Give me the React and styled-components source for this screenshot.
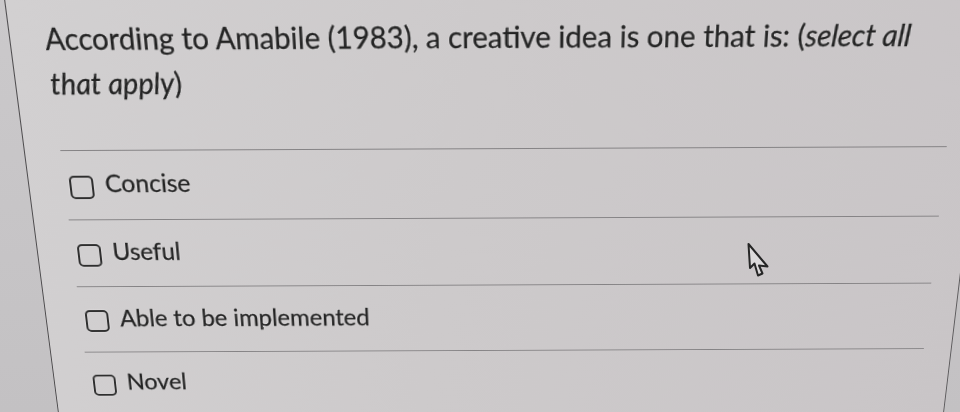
import React from 'react';
import styled, { createGlobalStyle } from 'styled-components';

const GlobalStyle = createGlobalStyle`
  html, body {
    margin: 0;
    padding: 0;
  }
  body {
    width: 960px;
    height: 412px;
    overflow: hidden;
    background: #c5c3c5;
    font-family: Lato, "Noto Sans", sans-serif;
  }
`;

const options = ['Concise', 'Useful', 'Able to be implemented', 'Novel'];

const Quiz = () => (
    <Stage>
        <GlobalStyle />
        <Scene>
            <Panel>
                <Question>
                    According to Amabile (1983), a creative idea is one that is: (<em>select all that apply</em>)
                </Question>
                <Options>
                    {options.map((label) => (
                        <Option key={label}>
                            <Box />
                            <Label>{label}</Label>
                        </Option>
                    ))}
                </Options>
            </Panel>
        </Scene>
        <Cursor viewBox="0 0 26 36" width="26" height="36">
            <path
                d="M3.5 2 L5 26 L9.5 21.5 L13 33.5 L17.5 31.5 L14 23.5 L22.5 24.5 Z"
                fill="#dcdadb"
                stroke="#262626"
                strokeWidth="2"
                strokeLinejoin="round"
            />
        </Cursor>
    </Stage>
)

const Stage = styled.div`
position: relative;
width: 960px;
height: 412px;
overflow: hidden;
background: linear-gradient(180deg, #cbc9cb 0%, #c3c1c3 100%);
`

// the photo is taken at an angle, so the whole page is tilted away at the bottom
const Scene = styled.div`
box-sizing: border-box;
width: 1000px;
height: 480px;
padding-left: 31px;
transform-origin: 500px 206px;
transform: perspective(1000px) rotateX(-15deg) rotate(-0.26deg);
`

const Panel = styled.section`
box-sizing: border-box;
width: 938px;
height: 100%;
padding: 17px 28.5px 0 33px;
border-left: 1.5px solid #4d4b4d;
border-right: 1.5px solid #5e5c5e;
background: linear-gradient(100deg, #d2d0d1 0%, #cdcacb 45%, #c9c5c7 100%);
color: #242424;
text-shadow: 0 0 1.5px rgba(255, 255, 255, 0.85);
-webkit-text-stroke: 0.3px #242424;
`

const Question = styled.p`
margin: 0;
font-size: 28.2px;
line-height: 43.4px;
font-weight: 400;

em {
    font-style: italic;
}
`

const Options = styled.div`
display: flex;
flex-direction: column;
margin: 43px 0 0 1.5px;
`

const Option = styled.div`
box-sizing: border-box;
display: flex;
align-items: center;
gap: 11.5px;
height: 71.3px;
padding-left: 5.5px;
border-top: 1.5px solid #858385;
`

const Box = styled.span`
box-sizing: border-box;
flex: none;
width: 24px;
height: 24px;
margin-top: 3.6px;
border: 2px solid #2e2e2e;
border-radius: 5px;
box-shadow: 0 0 1.5px rgba(255, 255, 255, 0.9);
`

const Label = styled.span`
font-size: 24.5px;
line-height: 1;
margin-bottom: 3.5px;
`

const Cursor = styled.svg`
position: absolute;
left: 745px;
top: 242px;
overflow: visible;
`

export default Quiz;
